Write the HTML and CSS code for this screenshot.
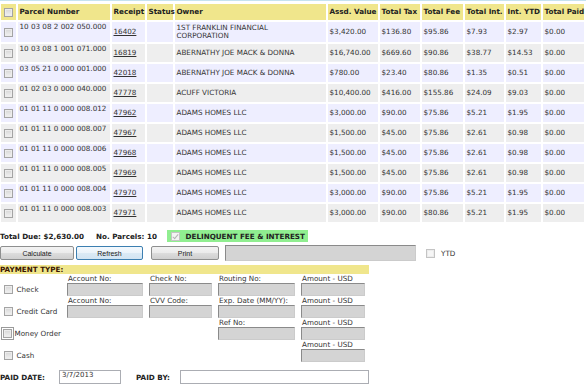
FILE: index.html
```html
<!DOCTYPE html>
<html>
<head>
    <link rel="stylesheet" href="styles.css">
</head>
<body>
<div class="topline"></div>
<table class="parcels">
    <colgroup>
        <col style="width:15px"><col style="width:92px"><col style="width:33px"><col style="width:26px">
        <col style="width:151px"><col style="width:50px"><col style="width:40px"><col style="width:41px">
        <col style="width:39px"><col style="width:35px"><col style="width:41px">
    </colgroup>
    <tr>
        <th class="ck"><input type="checkbox" class="cb"></th>
        <th>Parcel Number</th>
        <th>Receipt</th>
        <th>Status</th>
        <th>Owner</th>
        <th>Assd. Value</th>
        <th>Total Tax</th>
        <th>Total Fee</th>
        <th>Total Int.</th>
        <th>Int. YTD</th>
        <th>Total Paid</th>
    </tr>
    <tr class="odd">
        <td class="ck"><input type="checkbox" class="cb"></td>
        <td class="pn">10 03 08 2 002 050.000</td>
        <td><a href="#">16402</a></td><td></td>
        <td class="owner">1ST FRANKLIN FINANCIAL CORPORATION</td>
        <td>$3,420.00</td><td>$136.80</td><td>$95.86</td><td>$7.93</td><td>$2.97</td><td>$0.00</td>
    </tr>
    <tr class="even">
        <td class="ck"><input type="checkbox" class="cb"></td>
        <td class="pn">10 03 08 1 001 071.000</td>
        <td><a href="#">16819</a></td><td></td>
        <td class="owner">ABERNATHY JOE MACK &amp; DONNA</td>
        <td>$16,740.00</td><td>$669.60</td><td>$90.86</td><td>$38.77</td><td>$14.53</td><td>$0.00</td>
    </tr>
    <tr class="odd">
        <td class="ck"><input type="checkbox" class="cb"></td>
        <td class="pn">03 05 21 0 000 001.000</td>
        <td><a href="#">42018</a></td><td></td>
        <td class="owner">ABERNATHY JOE MACK &amp; DONNA</td>
        <td>$780.00</td><td>$23.40</td><td>$80.86</td><td>$1.35</td><td>$0.51</td><td>$0.00</td>
    </tr>
    <tr class="even">
        <td class="ck"><input type="checkbox" class="cb"></td>
        <td class="pn">01 02 03 0 000 040.000</td>
        <td><a href="#">47778</a></td><td></td>
        <td class="owner">ACUFF VICTORIA</td>
        <td>$10,400.00</td><td>$416.00</td><td>$155.86</td><td>$24.09</td><td>$9.03</td><td>$0.00</td>
    </tr>
    <tr class="odd">
        <td class="ck"><input type="checkbox" class="cb"></td>
        <td class="pn">01 01 11 0 000 008.012</td>
        <td><a href="#">47962</a></td><td></td>
        <td class="owner">ADAMS HOMES LLC</td>
        <td>$3,000.00</td><td>$90.00</td><td>$75.86</td><td>$5.21</td><td>$1.95</td><td>$0.00</td>
    </tr>
    <tr class="even">
        <td class="ck"><input type="checkbox" class="cb"></td>
        <td class="pn">01 01 11 0 000 008.007</td>
        <td><a href="#">47967</a></td><td></td>
        <td class="owner">ADAMS HOMES LLC</td>
        <td>$1,500.00</td><td>$45.00</td><td>$75.86</td><td>$2.61</td><td>$0.98</td><td>$0.00</td>
    </tr>
    <tr class="odd">
        <td class="ck"><input type="checkbox" class="cb"></td>
        <td class="pn">01 01 11 0 000 008.006</td>
        <td><a href="#">47968</a></td><td></td>
        <td class="owner">ADAMS HOMES LLC</td>
        <td>$1,500.00</td><td>$45.00</td><td>$75.86</td><td>$2.61</td><td>$0.98</td><td>$0.00</td>
    </tr>
    <tr class="even">
        <td class="ck"><input type="checkbox" class="cb"></td>
        <td class="pn">01 01 11 0 000 008.005</td>
        <td><a href="#">47969</a></td><td></td>
        <td class="owner">ADAMS HOMES LLC</td>
        <td>$1,500.00</td><td>$45.00</td><td>$75.86</td><td>$2.61</td><td>$0.98</td><td>$0.00</td>
    </tr>
    <tr class="odd">
        <td class="ck"><input type="checkbox" class="cb"></td>
        <td class="pn">01 01 11 0 000 008.004</td>
        <td><a href="#">47970</a></td><td></td>
        <td class="owner">ADAMS HOMES LLC</td>
        <td>$3,000.00</td><td>$90.00</td><td>$75.86</td><td>$5.21</td><td>$1.95</td><td>$0.00</td>
    </tr>
    <tr class="even">
        <td class="ck"><input type="checkbox" class="cb"></td>
        <td class="pn">01 01 11 0 000 008.003</td>
        <td><a href="#">47971</a></td><td></td>
        <td class="owner">ADAMS HOMES LLC</td>
        <td>$3,000.00</td><td>$90.00</td><td>$80.86</td><td>$5.21</td><td>$1.95</td><td>$0.00</td>
    </tr>
</table>

<div class="totals">
    <b class="due">Total Due: $2,630.00</b>
    <b class="count">No. Parcels: 10</b>
    <span class="delinq"><input type="checkbox" class="cb on" checked disabled>DELINQUENT FEE &amp; INTEREST</span>
</div>

<div class="actions">
    <button class="btn calc">Calculate</button>
    <button class="btn refresh">Refresh</button>
    <button class="btn print">Print</button>
    <input type="text" class="gray wide" disabled>
    <label class="ytd"><input type="checkbox" class="cb">YTD</label>
</div>

<div class="paybar">PAYMENT TYPE:</div>

<div class="paygrid">
    <label class="ptype"><input type="checkbox" class="cb">Check</label>
    <div class="fld"><span>Account No:</span><input type="text" class="gray" disabled></div>
    <div class="fld"><span>Check No:</span><input type="text" class="gray" disabled></div>
    <div class="fld"><span>Routing No:</span><input type="text" class="gray" disabled></div>
    <div class="fld"><span>Amount - USD</span><input type="text" class="gray" disabled></div>

    <label class="ptype"><input type="checkbox" class="cb">Credit Card</label>
    <div class="fld"><span>Account No:</span><input type="text" class="gray" disabled></div>
    <div class="fld"><span>CVV Code:</span><input type="text" class="gray" disabled></div>
    <div class="fld"><span>Exp. Date (MM/YY):</span><input type="text" class="gray" disabled></div>
    <div class="fld"><span>Amount - USD</span><input type="text" class="gray" disabled></div>

    <label class="ptype mo"><input type="checkbox" class="cb focus">Money Order</label>
    <div></div>
    <div></div>
    <div class="fld"><span>Ref No:</span><input type="text" class="gray" disabled></div>
    <div class="fld"><span>Amount - USD</span><input type="text" class="gray" disabled></div>

    <label class="ptype"><input type="checkbox" class="cb">Cash</label>
    <div></div>
    <div></div>
    <div></div>
    <div class="fld"><span>Amount - USD</span><input type="text" class="gray" disabled></div>
</div>

<div class="paid">
    <b class="plabel">PAID DATE:</b>
    <input type="text" class="txt date" value="3/7/2013">
    <b class="plabel by">PAID BY:</b>
    <input type="text" class="txt payer">
</div>
</body>
</html>
```

FILE: styles.css
```css
body {
    font-family: "DejaVu Sans", Verdana, sans-serif;
    font-size: 7.2px;
    color: #333;
    margin: 0;
    padding: 0;
}

.topline {
    border-top: 1px solid #c6e2ef;
}

/* parcel grid */
.parcels {
    table-layout: fixed;
    border-spacing: 2px;
    margin: 1px 0 0 -1px;
    width: 587px;
}

.parcels th {
    background-color: #f0e68c;
    color: #222;
    text-align: left;
    white-space: nowrap;
    height: 12px;
    padding: 2px 1.5px;
    line-height: 8px;
    overflow: visible;
}

.parcels td {
    height: 14px;
    padding: 2px 1.5px;
    line-height: 8px;
    vertical-align: middle;
    white-space: nowrap;
}

.parcels td.owner {
    white-space: normal;
    padding-right: 6px;
}

.parcels .ck {
    text-align: center;
    padding: 0;
}

.parcels td.pn {
    vertical-align: top;
    padding-top: 1px;
}

.odd td {
    background-color: #eeeeff;
}

.even td {
    background-color: #eeeeee;
}

.parcels a {
    color: #333;
    text-decoration: underline;
}

/* checkboxes */
input.cb {
    appearance: none;
    -webkit-appearance: none;
    box-sizing: border-box;
    width: 9px;
    height: 9px;
    margin: 0;
    border: 1px solid #a4a4a4;
    background: linear-gradient(#d6d6d6, #f2f2f2);
    box-shadow: inset 0 0 0 1px #ececec;
    vertical-align: middle;
    position: relative;
}

input.cb.on {
    border-color: #c4c4c4;
    background: #f4f4f4;
    box-shadow: none;
}

input.cb.on::after {
    content: "";
    position: absolute;
    left: 2px;
    top: 0px;
    width: 2px;
    height: 5px;
    border: solid #b4b4b4;
    border-width: 0 1px 1px 0;
    transform: rotate(40deg);
}

input.cb.focus {
    box-shadow: inset 0 0 0 1px #ececec, 0 0 0 1px #fff, 0 0 0 2px #9a9a9a;
}

/* totals */
.totals {
    display: flex;
    align-items: center;
    height: 12px;
    margin-top: 6px;
    color: #222;
}

.due {
    width: 96px;
}

.count {
    width: 71px;
}

.delinq {
    display: flex;
    align-items: center;
    height: 12px;
    padding: 0 3px 0 3.5px;
    background-color: #90ee90;
    font-weight: bold;
    color: #222;
}

.delinq .cb {
    margin-right: 6px;
}

/* buttons */
.actions {
    display: flex;
    align-items: center;
    height: 16px;
    margin-top: 3px;
}

.btn {
    font-family: "Liberation Sans", Arial, sans-serif;
    font-size: 7px;
    color: #222;
    height: 14px;
    padding: 0;
    border: 1px solid #8e8f8f;
    border-radius: 2px;
    background: linear-gradient(#f3f3f3, #ebebeb 50%, #dddddd 50%, #cfcfcf);
    cursor: pointer;
}

.calc {
    width: 74px;
    margin-right: 2px;
}

.refresh {
    width: 67px;
    margin-right: 8px;
    border-color: #3c7fb1;
    background: linear-gradient(#f4f9fd, #eaf3fa 50%, #dbeaf5 50%, #d2e4f2);
}

.print {
    width: 68px;
    margin-right: 6px;
}

input.gray {
    box-sizing: border-box;
    height: 13px;
    margin: 0;
    padding: 0;
    background-color: #d4d4d4;
    border: 1px solid;
    border-color: #8a8a8a #cbcbcb #cbcbcb #8a8a8a;
}

input.wide {
    width: 191px;
    height: 16px;
}

.ytd {
    display: flex;
    align-items: center;
    margin-left: 10px;
    color: #333;
}

.ytd .cb {
    margin-right: 6px;
    border-color: #c4c4c4;
    background: #f6f6f6;
}

/* payment type */
.paybar {
    width: 369px;
    height: 9px;
    line-height: 9px;
    margin-top: 4px;
    background-color: #f0e68c;
    font-weight: bold;
    color: #3a1400;
}

.paygrid {
    display: grid;
    grid-template-columns: 61px 76px 63px 77px 64px;
    column-gap: 6px;
    row-gap: 1px;
    margin-top: 1px;
}

.paygrid .ptype {
    grid-column: 1;
    align-self: end;
    display: flex;
    align-items: center;
    height: 14px;
    padding-left: 3.5px;
    margin-right: -6px;
    white-space: nowrap;
}

.ptype .cb {
    margin-right: 4px;
}

.ptype.mo {
    padding-left: 2.5px;
}

.ptype.mo .cb {
    margin-right: 3px;
}

.fld {
    display: flex;
    flex-direction: column;
}

.fld span {
    height: 8px;
    line-height: 8px;
    white-space: nowrap;
    padding-left: 1px;
}

.fld input {
    width: 100%;
}

/* paid row */
.paid {
    display: flex;
    align-items: center;
    height: 14px;
    margin-top: 8px;
    color: #222;
}

.plabel {
    width: 59px;
}

.plabel.by {
    width: 44px;
    margin-left: 15px;
}

input.txt {
    box-sizing: border-box;
    height: 14px;
    margin: 0;
    padding: 0 2px;
    border: 1px solid #abadb3;
    background-color: #fff;
    font-family: "DejaVu Sans", Verdana, sans-serif;
    font-size: 7px;
    color: #333;
}

.date {
    width: 62px;
    padding-bottom: 4px !important;
}

.payer {
    width: 189px;
}
```
